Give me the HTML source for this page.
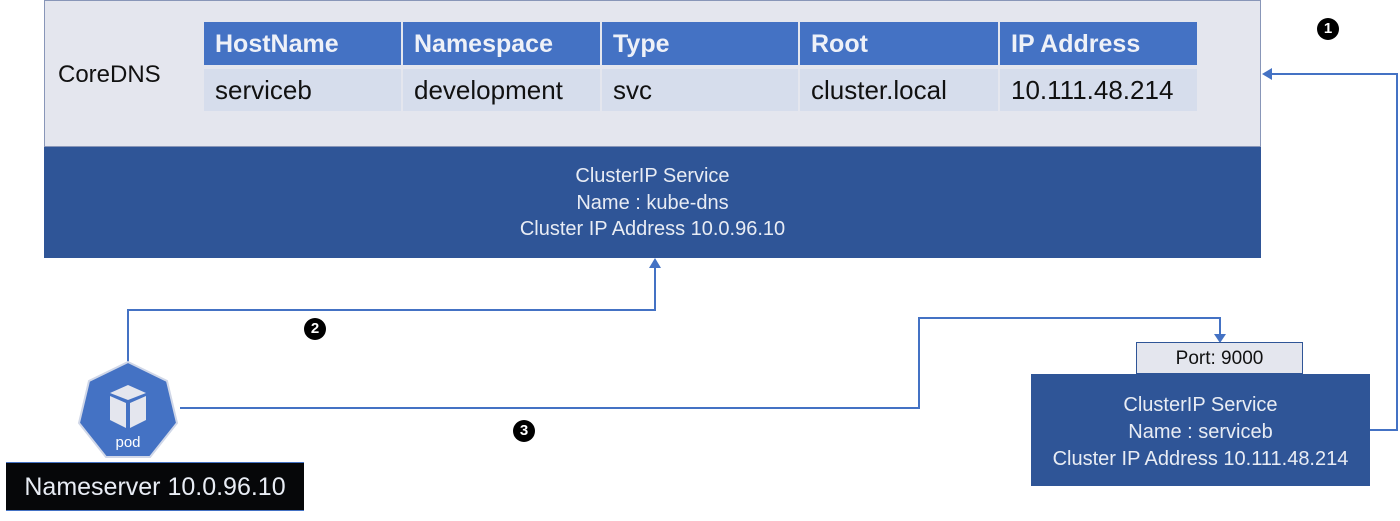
<!DOCTYPE html>
<html><head><style>
body{margin:0;width:1400px;height:521px;background:#fff;position:relative;overflow:hidden;font-family:"Liberation Sans",sans-serif}
.a{position:absolute}
.top{left:44px;top:0;width:1217px;height:147px;background:#e4e6ee;border:1px solid #8896b8;box-sizing:border-box}
.blue{background:#2f5597;color:#e8ecf4;text-align:center}
.h{background:#4472c4;color:#eef1f8;font-weight:bold;font-size:25px;top:22px;height:43px;line-height:45px;padding-left:11px;box-sizing:border-box;white-space:nowrap}
.r{background:#d6ddec;color:#111;font-size:26px;top:69px;height:42px;line-height:43px;padding-left:11px;box-sizing:border-box;white-space:nowrap}
.num{width:22px;height:22px;border-radius:50%;background:#000;color:#fff;font-size:15px;font-weight:bold;text-align:center;line-height:22px}
</style></head><body>
<div class="a top"></div>
<div class="a" style="left:58px;top:61px;font-size:24px;color:#111">CoreDNS</div>
<div class="a h" style="left:204px;width:197px">HostName</div>
<div class="a h" style="left:403px;width:197px">Namespace</div>
<div class="a h" style="left:602px;width:196px">Type</div>
<div class="a h" style="left:800px;width:198px">Root</div>
<div class="a h" style="left:1000px;width:197px">IP Address</div>
<div class="a r" style="left:204px;width:197px">serviceb</div>
<div class="a r" style="left:403px;width:197px">development</div>
<div class="a r" style="left:602px;width:196px">svc</div>
<div class="a r" style="left:800px;width:198px">cluster.local</div>
<div class="a r" style="left:1000px;width:197px">10.111.48.214</div>
<div class="a blue" style="left:44px;top:147px;width:1217px;height:111px;font-size:20px;line-height:26.5px;padding-top:16px;box-sizing:border-box">ClusterIP Service<br>Name : kube-dns<br>Cluster IP Address 10.0.96.10</div>
<svg class="a" style="left:0;top:0" width="1400" height="521">
<g fill="none" stroke="#4472c4" stroke-width="2">
<polyline points="128,362 128,310 655,310 655,266"/>
<polyline points="1370,430 1397,430 1397,74 1270,74"/>
<polyline points="180,408 919,408 919,318 1220,318 1220,336"/>
</g>
<g fill="#4472c4">
<polygon points="649,268 661,268 655,258"/>
<polygon points="1272,68 1272,80 1262,74"/>
<polygon points="1214,334 1226,334 1220,343"/>
<polygon points="128,362 167,381 177,423 150,457 106,457 79,423 89,381" stroke="#d0d7e8" stroke-width="2"/>
</g>
<g fill="#e4e6ee">
<polygon points="110,393 128,385 146,393 128,400"/>
<polygon points="110,396 126,403 126,428 110,420"/>
<polygon points="130,403 146,396 146,420 130,428"/>
</g>
<text x="128" y="447" fill="#fff" font-size="15" text-anchor="middle" font-family="Liberation Sans">pod</text>
</svg>
<div class="a num" style="left:1317px;top:18px">1</div>
<div class="a num" style="left:304px;top:318px">2</div>
<div class="a num" style="left:513px;top:420px">3</div>
<div class="a" style="left:6px;top:462px;width:298px;height:47px;background:#060709;color:#e8ecf4;font-size:25px;line-height:49px;text-align:center;border-top:1px solid #4472c4;border-bottom:1px solid #4472c4;white-space:nowrap">Nameserver 10.0.96.10</div>
<div class="a" style="left:1136px;top:342px;width:167px;height:32px;background:#e4e6ee;border:1px solid #2f5597;box-sizing:border-box;text-align:center;font-size:19px;line-height:31px;color:#111">Port: 9000</div>
<div class="a blue" style="left:1031px;top:374px;width:339px;height:112px;font-size:20px;line-height:27px;padding-top:18px;box-sizing:border-box;white-space:nowrap">ClusterIP Service<br>Name : serviceb<br>Cluster IP Address 10.111.48.214</div>
</body></html>
